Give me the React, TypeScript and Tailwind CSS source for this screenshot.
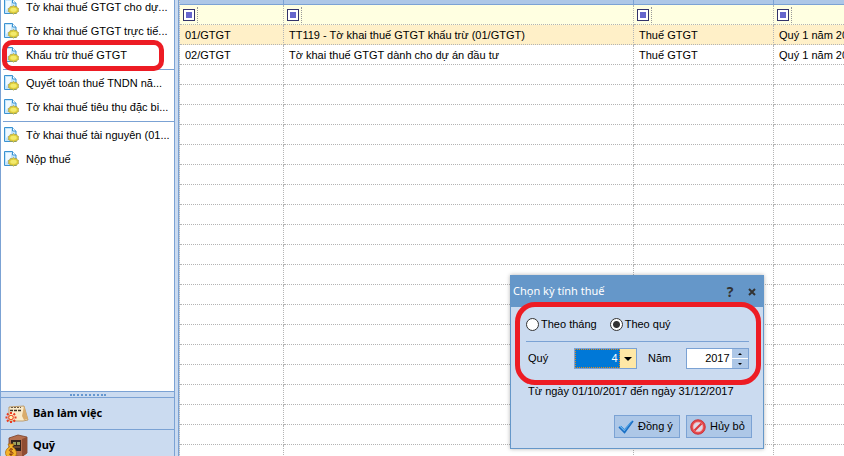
const menuGroups = [
  ["Tờ khai thuế GTGT cho dự...", "Tờ khai thuế GTGT trực tiế...", "Khấu trừ thuế GTGT"],
  ["Quyết toán thuế TNDN nă...", "Tờ khai thuế tiêu thụ đặc bi..."],
  ["Tờ khai thuế tài nguyên (01...", "Nộp thuế"],
];

const rows = [
  ["01/GTGT", "TT119 - Tờ khai thuế GTGT khấu trừ (01/GTGT)", "Thuế GTGT", "Quý 1 năm 20"],
  ["02/GTGT", "Tờ khai thuế GTGT dành cho dự án đầu tư", "Thuế GTGT", "Quý 1 năm 20"],
];

const emptyRows = Array.from({ length: 20 }, () => ["", "", "", ""]);

const DocIcon = () => (
  <svg viewBox="0 0 15 16" className="h-4 w-[15px] shrink-0" aria-hidden="true">
    <path d="M.5.5h8l3.500 3.500v10.500H.5z" fill="#c3e4fa" stroke="#3a92d2" />
    <path d="M2 2h5v5L2 11z" fill="#f0f9ff" />
    <path d="M8.500.5V4H12" fill="#fff" stroke="#3a92d2" />
    <path d="M9.500 6.500l1.300 1.100 1.900-.2.500 1.400 1.600.8-.6 1.400.6 1.400-1.600.7-.5 1.300-1.900-.2-1.300 1-1.300-1-1.900.2-.5-1.300-1.600-.7.6-1.400-.6-1.400 1.600-.8.500-1.400 1.900.2z" fill="#dfcf3c" stroke="#a3933a" strokeWidth=".6" />
    <ellipse cx="9.500" cy="10.800" rx="3.200" ry="2" fill="#f3ea6c" />
  </svg>
);

const DeskIcon = () => (
  <svg viewBox="0 0 24 20" className="h-5 w-6 shrink-0" aria-hidden="true">
    <path d="M4 3l15-1 4 14-5 1H4z" fill="#faebcb" stroke="#b48a50" strokeWidth=".8" />
    <path d="M19 2l4 13-4 1-2-4z" fill="#d9ac6c" />
    <path d="M6 3.500h10" stroke="#6a5a48" strokeDasharray="2 1" />
    <path d="M5 6.500h12" stroke="#3d3025" strokeWidth="1.600" strokeDasharray="3 1" />
    <g stroke="#ea3c22" strokeWidth="2" strokeDasharray="2.500 1">
      <path d="M6 13.500V8M6 13.500V19M6 13.500H.500M6 13.500h5.500M6 13.500l-4-4M6 13.500l4 4M6 13.500l4-4M6 13.500l-4 4" />
    </g>
    <circle cx="6" cy="13.500" r="2.200" fill="#fff3b8" stroke="#f0502e" />
  </svg>
);

const SafeIcon = () => (
  <svg viewBox="0 0 24 24" className="h-6 w-6 shrink-0" aria-hidden="true">
    <path d="M4 4l9-3 9 2v16l-6 4-12-3z" fill="#b46f4e" stroke="#7a4029" strokeWidth=".8" />
    <path d="M17 5l5-2v16l-5 4z" fill="#8f4d33" />
    <path d="M6 6h10v11H6z" fill="#33241e" />
    <path d="M8 8h3v3H8zM12 8h3v3h-3z" fill="#9aa05d" />
    <path d="M9 13h6" stroke="#9b6a48" />
    <path d="M3 10h6l-1.500 3c4.500 2 5.500 9 1.500 10H3c-4-2-3-8 1.500-10z" fill="#f4b32a" stroke="#b26e10" strokeWidth=".8" />
    <path d="M8 15.500c-2-1.500-4.500.3-3.300 1.500s3.700.8 3.300 2.500-3 1.500-4 .3M6 14v8" fill="none" stroke="#8d3d10" strokeWidth="1" />
  </svg>
);

const OkIcon = () => (
  <svg viewBox="0 0 16 14" className="h-[14px] w-4 shrink-0" aria-hidden="true">
    <path d="M.5 7l2-1.500L6.500 9l7-8.500 2 .5-8.500 12.500z" fill="#6fb4ec" />
    <path d="M1 7l5.500 5.500L15 1" fill="none" stroke="#1b6fc4" strokeWidth="1.500" />
    <path d="M3 6l3.500 3.500L13 2" fill="none" stroke="#3f93dc" />
  </svg>
);

const CancelIcon = () => (
  <svg viewBox="0 0 16 16" className="size-4 shrink-0" aria-hidden="true">
    <circle cx="8" cy="8" r="7.300" fill="#e5474b" stroke="#c4282e" strokeWidth=".8" />
    <circle cx="8" cy="8" r="4.800" fill="#dcd9e8" stroke="#f6b0ae" strokeWidth=".8" />
    <path d="M4.500 11.500l7-7" stroke="#dc383d" strokeWidth="2.200" />
  </svg>
);

const FilterCell = () => (
  <div className="flex h-[19px] items-center">
    <div className="ml-[3px] flex size-3 items-center justify-center border border-[#33336b] bg-white">
      <div className="size-[6px] bg-[#6666cc]" />
    </div>
    <div className="ml-[2px] h-4 border-l border-dotted border-[#999]" />
  </div>
);

const Sidebar = () => (
  <aside className="flex w-[175px] shrink-0 flex-col overflow-hidden border-x border-[#7ba2d4] bg-white">
    <nav className="-mt-[5px] flex-1">
      {menuGroups.map((group, i) => (
        <ul key={i} className={i > 0 ? "mt-[2px] ml-[2px] border-t border-[#7ba2d4] pt-px" : ""}>
          {group.map((label) => (
            <li key={label} className={i > 0 ? "relative -ml-[2px]" : "relative"}>
              <a href="#" className="flex h-6 items-center gap-[7px] pl-[3px] whitespace-nowrap">
                <DocIcon />
                {label}
              </a>
              {label === "Khấu trừ thuế GTGT" && (
                <div className="pointer-events-none absolute -top-[3px] left-px z-10 h-[31px] w-[162px] rounded-[10px] border-[5px] border-[#ed1c24]" />
              )}
            </li>
          ))}
        </ul>
      ))}
    </nav>
    <div className="-mb-[5px] bg-[#cbdbf0] font-['Noto_Sans',sans-serif] font-bold">
      <div className="flex h-[6px] items-center justify-center border-t border-[#7ba2d4]">
        <div className="w-9 border-t-2 border-dotted border-[#6597d0]" />
      </div>
      <button className="flex h-8 w-full items-center gap-1 border-t border-[#7ba2d4] pl-1">
        <DeskIcon />
        Bàn làm việc
      </button>
      <button className="flex h-8 w-full items-center gap-1 border-t border-[#7ba2d4] pl-1">
        <SafeIcon />
        Quỹ
      </button>
    </div>
  </aside>
);

const TaxTable = () => (
  <table className="w-full table-fixed border-separate border-spacing-0 border-l border-dotted border-[#b4b4b4]">
    <colgroup>
      <col className="w-[104px]" />
      <col className="w-[350px]" />
      <col className="w-[140px]" />
      <col />
    </colgroup>
    <thead>
      <tr className="bg-[#adc7e7]">
        {[0, 1, 2, 3].map((c) => (
          <th key={c} className="h-[5px] border-r border-b border-[#7ba2d4] p-0 last:border-r-0" />
        ))}
      </tr>
      <tr className="bg-[#ffffe1]">
        {[0, 1, 2, 3].map((c) => (
          <td key={c} className="h-5 border-r border-b border-dotted border-[#b4b4b4] p-0 last:border-r-0">
            <FilterCell />
          </td>
        ))}
      </tr>
    </thead>
    <tbody>
      {[...rows, ...emptyRows].map((row, r) => (
        <tr key={r} className={r === 0 ? "bg-[#fff0c8]" : "bg-white"}>
          {row.map((cell, c) => (
            <td key={c} className="h-5 border-r border-b border-dotted border-[#b4b4b4] p-0 pl-[5px] leading-4 whitespace-nowrap last:border-r-0">
              {cell}
            </td>
          ))}
        </tr>
      ))}
    </tbody>
  </table>
);

const PeriodDialog = () => (
  <div role="dialog" aria-labelledby="dialog-title" className="absolute right-20 bottom-[7px] w-[254px] border border-[#6597c9] bg-[#cbdbf0] shadow-[0_0_4px_rgba(0,0,0,0.3)]">
    <header className="flex h-[31px] items-center bg-[#6597c9] pr-[3px] pl-[2px] font-['Noto_Sans',sans-serif] text-white">
      <h2 id="dialog-title" className="flex-1">Chọn kỳ tính thuế</h2>
      <button aria-label="Trợ giúp" className="w-4 text-sm font-bold text-[#333]">?</button>
      <button aria-label="Đóng" className="ml-[6px] flex w-4 justify-center">
        <svg viewBox="0 0 8 8" className="size-2">
          <path d="M1 1l6 6M7 1L1 7" stroke="#333" strokeWidth="2" />
        </svg>
      </button>
    </header>
    <form className="relative px-[14px] pb-[10px]">
      <div className="pointer-events-none absolute -top-[5px] left-1 h-[83px] w-[246px] rounded-[20px] border-[5px] border-[#ed1c24]" />
      <div className="ml-px flex h-[35px] items-center gap-[13px] border-b border-[#7ba2d4]">
        <label className="flex items-center gap-[2px]">
          <input type="radio" name="period" className="size-[13px] appearance-none rounded-full border border-[#333] bg-white checked:bg-[radial-gradient(circle,#333_3px,white_4px)]" />
          Theo tháng
        </label>
        <label className="flex items-center gap-[2px]">
          <input type="radio" name="period" defaultChecked className="size-[13px] appearance-none rounded-full border border-[#333] bg-white checked:bg-[radial-gradient(circle,#333_3px,white_4px)]" />
          Theo quý
        </label>
      </div>
      <div className="mt-[6px] flex h-[21px] items-center pl-[3px]">
        <label htmlFor="quarter" className="w-[46px]">Quý</label>
        <div className="relative h-[21px] w-16 border border-[#7ba2d4] bg-[#ffe8a6]">
          <select id="quarter" defaultValue="4" className="block h-full w-[45px] appearance-none border border-dotted border-[#e08a20] bg-[#0078d7] pr-px text-right text-white">
            <option>1</option>
            <option>2</option>
            <option>3</option>
            <option>4</option>
          </select>
          <svg viewBox="0 0 8 4" className="pointer-events-none absolute top-2 right-1 h-1 w-2">
            <path d="M0 0h8L4 4z" />
          </svg>
        </div>
        <label htmlFor="year" className="ml-[11px] w-[38px]">Năm</label>
        <div className="flex h-[21px] w-16 border border-[#7ba2d4] bg-white">
          <input id="year" defaultValue="2017" className="w-[44px] min-w-0 pr-px text-right" />
          <div className="ml-px flex flex-1 flex-col gap-px">
            <button type="button" aria-label="Tăng" className="flex flex-1 items-center justify-center bg-[#adc7e7]">
              <svg viewBox="0 0 4 2" className="h-[2px] w-1"><path d="M0 2h4L2 0z" /></svg>
            </button>
            <button type="button" aria-label="Giảm" className="flex flex-1 items-center justify-center bg-[#adc7e7]">
              <svg viewBox="0 0 4 2" className="h-[2px] w-1"><path d="M0 0h4L2 2z" /></svg>
            </button>
          </div>
        </div>
      </div>
      <p className="mt-[14px] pl-[3px] leading-4">Từ ngày 01/10/2017 đến ngày 31/12/2017</p>
      <div className="-mr-[3px] mt-4 flex justify-end gap-[6px]">
        <button type="button" className="flex h-[23px] w-[66px] items-center gap-1 border border-[#7ba2d4] bg-[#adc7e7] pl-[3px]">
          <OkIcon />
          Đồng ý
        </button>
        <button type="button" className="flex h-[23px] w-[66px] items-center gap-1 border border-[#7ba2d4] bg-[#adc7e7] pl-[3px]">
          <CancelIcon />
          Hủy bỏ
        </button>
      </div>
    </form>
  </div>
);

export default function App() {
  return (
    <div className="relative flex h-screen overflow-hidden bg-[#cbdbf0] font-['Liberation_Sans',sans-serif] text-[11px] text-black">
      <Sidebar />
      <main className="ml-[3px] min-w-0 flex-1 overflow-hidden border-l border-[#7ba2d4]">
        <TaxTable />
      </main>
      <PeriodDialog />
    </div>
  );
}
